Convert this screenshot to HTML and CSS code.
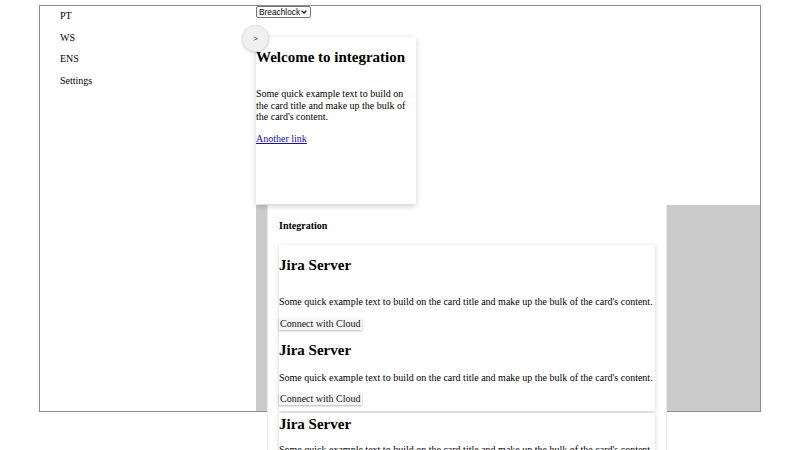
FILE: index.html
```html
<!DOCTYPE html>
<html lang="en">
<head>
<meta charset="utf-8">
<title>Integration</title>
<link rel="stylesheet" href="styles.css">
</head>
<body>
<div class="app">
  <nav class="sidebar">
    <ul class="menu">
      <li>PT</li>
      <li>WS</li>
      <li>ENS</li>
      <li>Settings</li>
    </ul>
  </nav>
  <main class="content">
    <select class="org"><option>Breachlock</option></select>
    <button class="toggle">&gt;</button>
    <div class="welcome">
      <h2 class="welcome-title">Welcome to integration</h2>
      <p class="text">Some quick example text to build on the card title and make up the bulk of the card's content.</p>
      <p class="link-row"><a href="#">Another link</a></p>
    </div>
    <div class="stage">
      <section class="panel">
        <p class="panel-title">Integration</p>
        <div class="int-card first">
          <h2 class="int-title lead">Jira Server</h2>
          <p class="text">Some quick example text to build on the card title and make up the bulk of the card's content.</p>
          <button class="connect">Connect with Cloud</button>
          <h2 class="int-title">Jira Server</h2>
          <p class="text">Some quick example text to build on the card title and make up the bulk of the card's content.</p>
          <button class="connect">Connect with Cloud</button>
        </div>
        <div class="int-card second">
          <h2 class="int-title top">Jira Server</h2>
          <p class="text">Some quick example text to build on the card title and make up the bulk of the card's content.</p>
          <button class="connect">Connect with Cloud</button>
        </div>
      </section>
    </div>
  </main>
</div>
</body>
</html>
```
FILE: styles.css
```css
html, body {
  margin: 0;
  padding: 0;
  background: #fff;
}
body {
  min-height: 520px;
  padding-top: 5px;
  box-sizing: border-box;
  font-family: "Liberation Serif", "Times New Roman", serif;
  font-size: 10px;
  line-height: 11.5px;
  color: #000;
}
.app {
  display: flex;
  width: 720px;
  height: 405px;
  margin: 0 0 0 39px;
  border: 1px solid #8c8c8c;
}
.sidebar {
  flex: none;
  width: 216px;
}
.menu {
  list-style: none;
  margin: -1px 0 0;
  padding: 0 0 0 20px;
}
.menu li {
  padding: 5px 0;
}
.content {
  flex: none;
  width: 504px;
  display: flex;
  flex-direction: column;
  position: relative;
}
.org {
  -webkit-appearance: none;
  appearance: none;
  align-self: flex-start;
  width: 55px;
  height: 12px;
  margin: 0;
  padding: 0 0 0 2px;
  font-family: "Liberation Sans", Arial, sans-serif;
  font-size: 8.3px;
  line-height: 10px;
  border: 1px solid #767676;
  border-radius: 2px;
  color: #000;
  background: #fff url("data:image/svg+xml;utf8,<svg xmlns='http://www.w3.org/2000/svg' width='6' height='4' viewBox='0 0 6 4'><path d='M0.6 0.6 L3 3 L5.4 0.6' fill='none' stroke='black' stroke-width='1.3'/></svg>") no-repeat right 3px center;
}
.toggle {
  position: absolute;
  left: -14px;
  top: 19px;
  width: 27px;
  height: 27px;
  border-radius: 50%;
  border: 1px solid #e2e2e2;
  background: #f0f0f0;
  box-shadow: 0 1px 3px rgba(0, 0, 0, 0.18);
  font-family: "Liberation Sans", Arial, sans-serif;
  font-size: 8px;
  color: #222;
  padding: 0;
  z-index: 2;
}
.welcome {
  flex: none;
  width: 160px;
  height: 167px;
  margin: 19px 0 1px;
  background: #fff;
  box-shadow: 0 2px 6px rgba(0, 0, 0, 0.2);
  position: relative;
  z-index: 1;
}
.welcome-title {
  font-size: 15px;
  line-height: 17.25px;
  margin: 12.4px 0 21.6px;
}
.text {
  margin: 0 0 10px;
}
.link-row {
  margin: 0;
}
.link-row a {
  color: #1a0dab;
}
.stage {
  flex: 1 1 0;
  min-height: 0;
  background: #cbcbcb;
  padding-left: 11px;
}
.panel {
  width: 400px;
  box-sizing: border-box;
  background: #fff;
  border-left: 1px solid #e8e8e8;
  border-right: 1px solid #e8e8e8;
  padding: 15px 11px 20px;
}
.panel-title {
  margin: 0 0 13.5px;
  font-weight: bold;
}
.int-card {
  background: #fff;
  box-shadow: 0 1px 4px rgba(0, 0, 0, 0.2);
  padding: 0 0 6px;
  display: flow-root;
}
.int-card.second {
  margin-top: 2px;
}
.int-title {
  font-size: 15px;
  line-height: 17.25px;
  margin: 12.45px 0 12.45px;
}
.int-title.lead {
  margin-bottom: 21.6px;
}
.int-title.top {
  margin: 3px 0 10px;
}
.connect {
  display: block;
  margin: 0;
  padding: 0 1px;
  height: 12px;
  line-height: 12px;
  font-family: "Liberation Serif", "Times New Roman", serif;
  font-size: 10px;
  color: #111;
  background: #f7f7f7;
  border: none;
  box-shadow: 0 1px 2px rgba(0, 0, 0, 0.3);
}
```
